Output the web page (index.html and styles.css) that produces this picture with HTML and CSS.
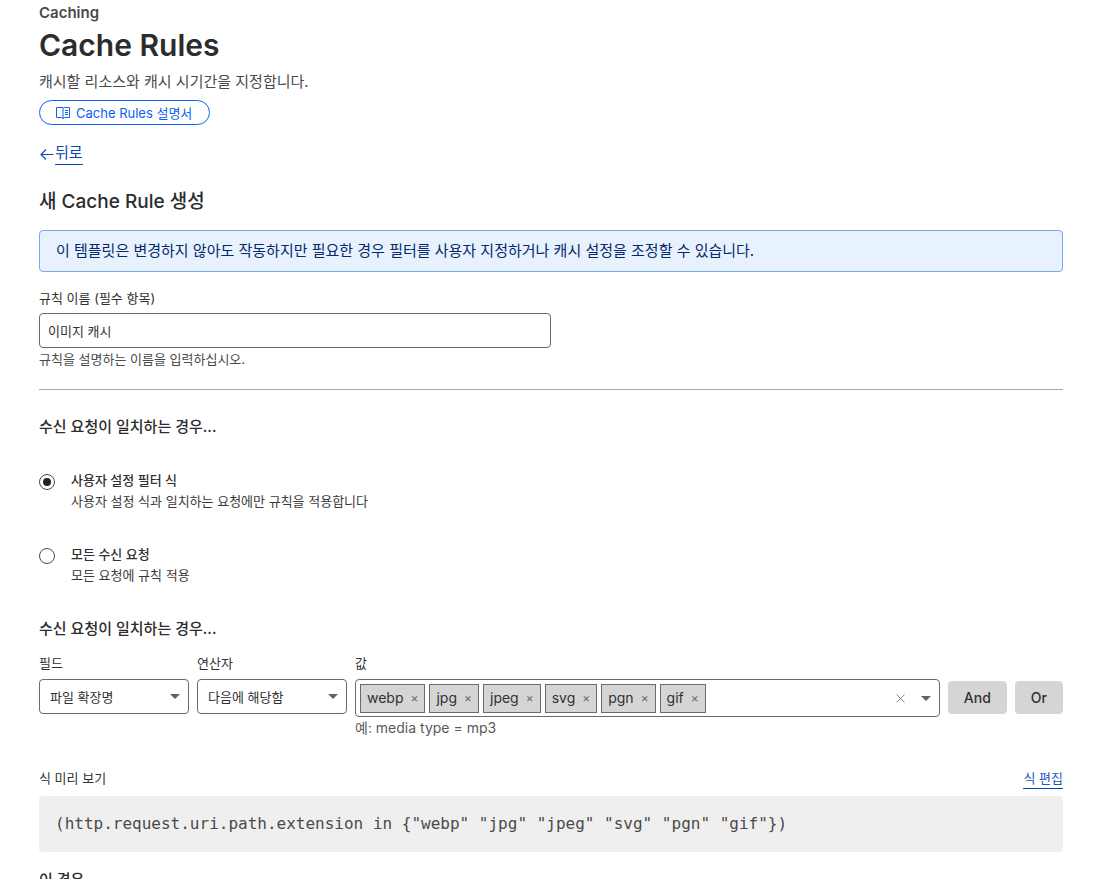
FILE: index.html
```html
<!DOCTYPE html>
<html lang="ko">
<head>
  <meta charset="UTF-8">
  <meta name="viewport" content="width=device-width, initial-scale=1">
  <title>Cache Rules</title>
  <link rel="stylesheet" href="styles.css">
</head>
<body>
  <main class="page">
    <header class="page-header">
      <p class="section-name">Caching</p>
      <h1>Cache Rules</h1>
      <p class="lead">캐시할 리소스와 캐시 시기간을 지정합니다.</p>
      <a class="docs-link" href="#">
        <svg width="14" height="13" viewBox="0 0 14 13" fill="none" stroke="currentColor">
          <path d="M7 1.5 H.5 V11.500 H5.500 L7 12.500 L8.500 11.500 H13.500 V1.500 H8.500 L7 2.500 V12.500"/>
          <path d="M9 4.500 H12 M9 6.500 H12 M9 8.500 H12"/>
        </svg>
        <span>Cache Rules 설명서</span>
      </a>
    </header>

    <a class="back-link" href="#">
      <svg width="16" height="16" viewBox="0 0 16 16" fill="none" stroke="currentColor" stroke-width="1.1">
        <path d="M14.500 8.500 H2 M7 3.500 L2 8.500 L7 13.500"/>
      </svg>
      <span>뒤로</span>
    </a>

    <form class="rule-form">
      <h2>새 Cache Rule 생성</h2>
      <div class="banner">이 템플릿은 변경하지 않아도 작동하지만 필요한 경우 필터를 사용자 지정하거나 캐시 설정을 조정할 수 있습니다.</div>

      <div class="name-field">
        <label for="rule-name">규칙 이름 (필수 항목)</label>
        <input id="rule-name" class="text-input" type="text" value="이미지 캐시">
        <p class="help">규칙을 설명하는 이름을 입력하십시오.</p>
      </div>

      <hr>

      <h3>수신 요청이 일치하는 경우...</h3>
      <div class="radio-list">
        <div class="radio-item">
          <input type="radio" name="match" id="match-custom" checked>
          <label for="match-custom">
            <strong>사용자 설정 필터 식</strong>
            <span>사용자 설정 식과 일치하는 요청에만 규칙을 적용합니다</span>
          </label>
        </div>
        <div class="radio-item">
          <input type="radio" name="match" id="match-all">
          <label for="match-all">
            <strong>모든 수신 요청</strong>
            <span>모든 요청에 규칙 적용</span>
          </label>
        </div>
      </div>

      <h3>수신 요청이 일치하는 경우...</h3>
      <div class="expression">
        <div class="field">
          <label for="field">필드</label>
          <div class="select">
            <select id="field"><option>파일 확장명</option></select>
          </div>
        </div>
        <div class="field">
          <label for="operator">연산자</label>
          <div class="select">
            <select id="operator"><option>다음에 해당함</option></select>
          </div>
        </div>
        <div class="field field-value">
          <label for="value">값</label>
          <div class="tag-box">
            <span class="tag">webp <button type="button" aria-label="webp 제거">×</button></span>
            <span class="tag">jpg <button type="button" aria-label="jpg 제거">×</button></span>
            <span class="tag">jpeg <button type="button" aria-label="jpeg 제거">×</button></span>
            <span class="tag">svg <button type="button" aria-label="svg 제거">×</button></span>
            <span class="tag">pgn <button type="button" aria-label="pgn 제거">×</button></span>
            <span class="tag">gif <button type="button" aria-label="gif 제거">×</button></span>
            <input id="value" type="text">
            <button class="clear" type="button" aria-label="모두 지우기">
              <svg width="9" height="9" viewBox="0 0 9 9" stroke="currentColor"><path d="M.5 .5 L8.500 8.500 M8.500 .5 L.5 8.500"/></svg>
            </button>
            <button class="arrow" type="button" aria-label="열기"></button>
          </div>
          <p class="hint">예: media type = mp3</p>
        </div>
        <div class="logic">
          <button class="btn" type="button">And</button>
          <button class="btn" type="button">Or</button>
        </div>
      </div>

      <div class="preview-header">
        <span>식 미리 보기</span>
        <a href="#">식 편집</a>
      </div>
      <pre class="preview">(http.request.uri.path.extension in {"webp" "jpg" "jpeg" "svg" "pgn" "gif"})</pre>

      <h3>이 경우...</h3>
    </form>
  </main>
</body>
</html>
```
FILE: styles.css
```css
* {
  box-sizing: border-box;
}

body {
  margin: 0;
  background-color: #fff;
  color: #313131;
  font-family: Inter, "Noto Sans CJK KR", sans-serif;
  font-size: 13px;
  line-height: 20px;
}

h1, h2, h3, p {
  margin: 0;
}

button, input, select {
  font: inherit;
  color: inherit;
}

.page {
  padding: 3px 49px 0 39px;
}

.page-header {
  display: flex;
  flex-direction: column;
  align-items: flex-start;
}

.section-name {
  color: #4a4a4a;
  font-size: 15px;
  font-weight: 600;
}

h1 {
  margin-top: 4px;
  color: #2c2c2c;
  font-size: 30px;
  font-weight: 600;
  line-height: 36px;
}

.lead {
  margin: 7px 0 6px;
  color: #4a4a4a;
  font-size: 15px;
  line-height: 24px;
}

.docs-link {
  display: flex;
  align-items: center;
  gap: 6px;
  height: 25px;
  padding: 0 17px 0 16px;
  border: 1px solid #0d62f2;
  border-radius: 13px;
  color: #0d62f2;
  font-size: 13px;
  text-decoration: none;
}

.back-link {
  display: inline-flex;
  align-items: center;
  margin: 17px 0 24px;
  color: #0a46b4;
  font-size: 15px;
  line-height: 22px;
  text-decoration: none;
}

.back-link span {
  border-bottom: 1px solid #0a46b4;
}

h2 {
  color: #2c2c2c;
  font-size: 19px;
  font-weight: 500;
  line-height: 26px;
}

.banner {
  margin: 15px 0 16px;
  padding: 8px 16px;
  border: 1px solid #76a9f7;
  border-radius: 4px;
  background-color: #e8f2fe;
  color: #05296b;
  font-size: 15px;
  line-height: 24px;
}

.name-field {
  display: flex;
  flex-direction: column;
  max-width: 512px;
}

.text-input {
  height: 35px;
  margin-top: 5px;
  padding: 0 8px;
  border: 1px solid #6b6b6b;
  border-radius: 4px;
}

.help {
  color: #4a4a4a;
  line-height: 22px;
}

hr {
  margin: 19px 0 25px;
  border: 0;
  border-top: 1px solid #a9a9a9;
}

h3 {
  color: #2c2c2c;
  font-size: 15px;
  font-weight: 500;
  line-height: 24px;
}

.radio-list {
  display: flex;
  flex-direction: column;
  gap: 32px;
  margin: 31px 0 31px;
}

.radio-item {
  display: flex;
  gap: 16px;
}

.radio-item input {
  display: grid;
  place-items: center;
  width: 16px;
  height: 16px;
  margin: 4px 0 0;
  border: 1px solid #4a4a4a;
  border-radius: 50%;
  appearance: none;
}

.radio-item input:checked::before {
  width: 8px;
  height: 8px;
  border-radius: 50%;
  background-color: #222;
  content: "";
}

.radio-item label {
  display: flex;
  flex-direction: column;
}

.radio-item strong {
  font-weight: 500;
}

.radio-item span {
  color: #3a3a3a;
  line-height: 22px;
}

.expression {
  display: flex;
  gap: 8px;
  margin: 12px 0 30px;
}

.field {
  display: flex;
  flex: 0 0 150px;
  flex-direction: column;
}

.field label {
  margin-bottom: 6px;
}

.field-value {
  flex: 1;
  min-width: 0;
}

.select {
  display: grid;
  align-items: center;
}

.select select,
.select::after {
  grid-area: 1 / 1;
}

.select select {
  height: 35px;
  padding: 0 10px;
  border: 1px solid #6b6b6b;
  border-radius: 4px;
  background-color: #fff;
  appearance: none;
}

.select::after,
.arrow::before {
  width: 0;
  border: 5px solid transparent;
  border-top-color: #5f6368;
  border-bottom: 0;
  content: "";
}

.select::after {
  justify-self: end;
  margin-right: 9px;
  pointer-events: none;
}

.tag-box {
  display: flex;
  align-items: center;
  gap: 4px;
  height: 38px;
  padding: 0 8px 0 4px;
  border: 1px solid #6b6b6b;
  border-radius: 4px;
}

.tag-box button {
  display: flex;
  padding: 0;
  border: 0;
  background: none;
}

.tag {
  display: flex;
  align-items: center;
  gap: 7px;
  height: 29px;
  padding: 0 6px;
  border: 1px solid #6b6b6b;
  background-color: #d5d5d5;
  font-size: 14px;
}

.tag button {
  color: #6b6b6b;
  font-size: 12px;
}

.tag-box input {
  flex: 1;
  min-width: 0;
  border: 0;
  outline: 0;
}

.tag-box .clear {
  margin-right: 12px;
  color: #8a8a8a;
}

.hint {
  margin-top: 1px;
  color: #5a5a5a;
  font-size: 14px;
}

.logic {
  display: flex;
  gap: 8px;
  padding-top: 28px;
}

.btn {
  height: 33px;
  padding: 0 16px;
  border: 0;
  border-radius: 4px;
  background-color: #d5d5d5;
  font-size: 14px;
  font-weight: 500;
}

.preview-header {
  display: flex;
  justify-content: space-between;
  margin-bottom: 7px;
}

.preview-header a {
  border-bottom: 1px solid #0a46b4;
  color: #1a56c4;
  text-decoration: none;
}

.preview {
  margin: 0 0 16px;
  padding: 16px;
  border-radius: 4px;
  background-color: #efefef;
  color: #4a4a4a;
  font-family: "DejaVu Sans Mono", monospace;
  font-size: 16px;
  line-height: 24px;
  overflow-x: auto;
}
```
